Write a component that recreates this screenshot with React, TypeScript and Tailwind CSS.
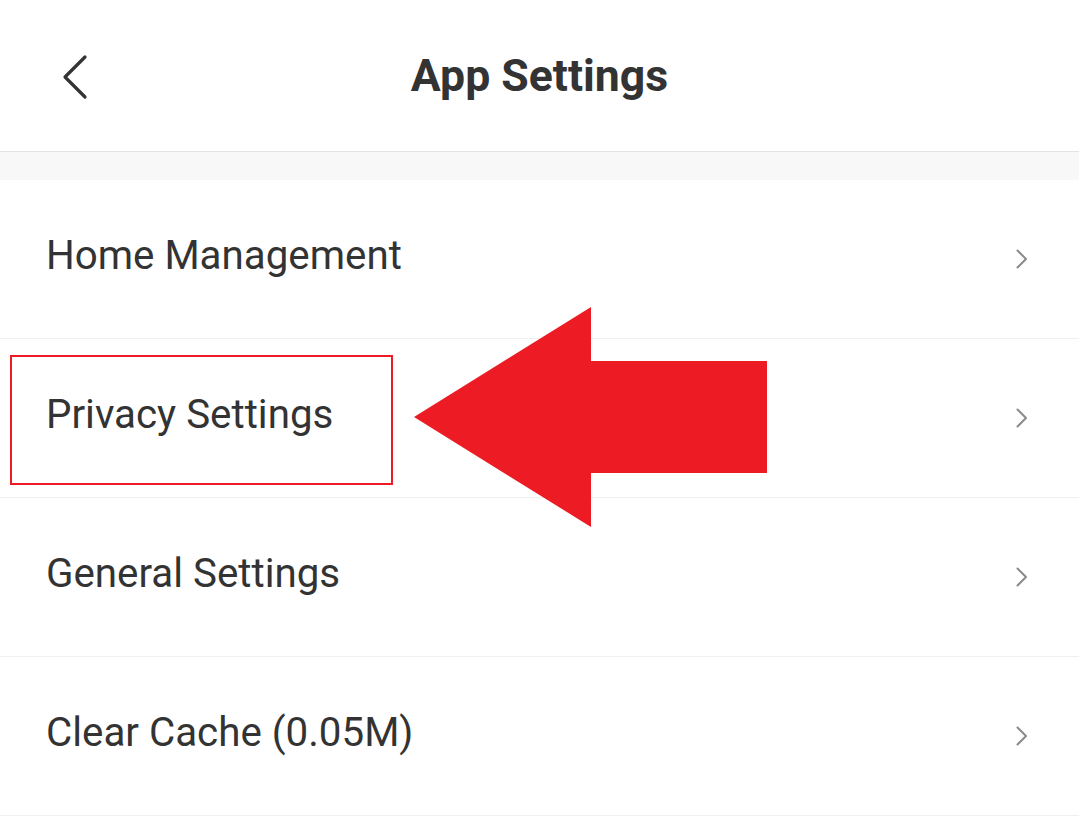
import React from "react";

const rows = ["Home Management", "Privacy Settings", "General Settings", "Clear Cache (0.05M)"];

function ChevronRight() {
  return (
    <svg width="14" height="22" viewBox="0 0 14 22" fill="none">
      <path d="M2.5 2.5 L11 11 L2.5 19.5" stroke="#8a8a8a" strokeWidth="2" strokeLinecap="round" strokeLinejoin="round" />
    </svg>
  );
}

export default function App() {
  return (
    <div className="relative w-[1079px] h-[816px] overflow-hidden bg-white" style={{ fontFamily: "Roboto, 'Noto Sans', sans-serif" }}>
      <header className="relative h-[152px] border-b border-[#e3e3e3] flex items-center justify-center">
        <button className="absolute left-[60px] top-[53px] w-[30px] h-[48px] flex items-center justify-center">
          <svg width="28" height="46" viewBox="0 0 28 46" fill="none">
            <path d="M24 3 L4 23 L24 43" stroke="#333333" strokeWidth="3.2" strokeLinecap="round" strokeLinejoin="round" />
          </svg>
        </button>
        <h1 className="text-[44.6px] font-bold text-[#333333] leading-none mt-[2px]">App Settings</h1>
      </header>
      <div className="h-[28px] bg-[#f8f8f8]" />
      <div>
        {rows.map((r) => (
          <div key={r} className="h-[159px] border-b border-[#f0f0f0] flex items-center justify-between pl-[46px] pr-[50px]">
            <span className="text-[40.3px] text-[#333333] leading-none mb-[6px]">{r}</span>
            <ChevronRight />
          </div>
        ))}
      </div>
      <div className="absolute left-[10px] top-[355px] w-[383px] h-[130px] border-[2.5px] border-[#ed1c24]" />
      <svg className="absolute left-0 top-0" width="1079" height="816" viewBox="0 0 1079 816">
        <polygon points="414,417 591,307 591,361 767,361 767,473 591,473 591,527" fill="#ed1c24" />
      </svg>
    </div>
  );
}
